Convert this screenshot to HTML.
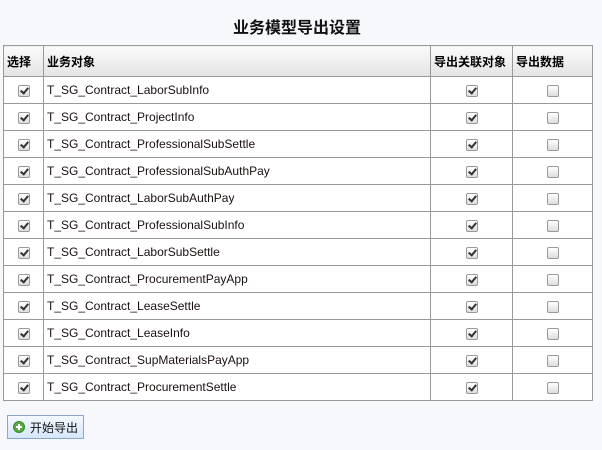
<!DOCTYPE html>
<html><head><meta charset="utf-8"><style>
body{margin:0;width:602px;height:450px;background:#f7f8fc;font-family:"Liberation Sans","Noto Sans CJK SC",sans-serif;position:relative;overflow:hidden}
h1{position:absolute;top:14px;left:0;width:594px;text-align:center;margin:0;font-size:16px;font-weight:bold;color:#111}
table{position:absolute;left:3px;top:45px;border-collapse:collapse;width:590px;background:#fff}
td,th{border:1px solid #999;font-size:12px;padding:0 0 0 3px;text-align:left;color:#1a1010}
th{height:30px;background:linear-gradient(#fafafa,#e4e4e4);font-weight:bold;color:#000}
td{height:26px}
.c{text-align:center;padding:0}
.cb{display:inline-block;width:10px;height:10px;border:1px solid #999;border-radius:2px;background:linear-gradient(#fff,#ddd);position:relative;vertical-align:middle}
.k:after{content:"";position:absolute;left:3px;top:0px;width:3px;height:6px;border:solid #333;border-width:0 2px 2px 0;transform:rotate(40deg)}
.btn{position:absolute;left:7px;top:415px;width:77px;height:24px;border:1px solid #8ba6c8;background:linear-gradient(#f4f9ff,#d6e7fb);font-size:12px;line-height:24px;box-sizing:border-box;padding-left:22px;color:#111}
.ic{position:absolute;left:5px;top:5px;width:12px;height:12px;border-radius:50%;background:#5aa845;border:1px solid #3c8a2c;box-sizing:border-box}
.ic:before{content:"";position:absolute;left:2px;top:4px;width:6px;height:2px;background:#fff}
.ic:after{content:"";position:absolute;left:4px;top:2px;width:2px;height:6px;background:#fff}
</style></head><body>
<h1>业务模型导出设置</h1>
<table>
<tr><th style="width:36px">选择</th><th style="width:383px">业务对象</th><th style="width:78px">导出关联对象</th><th>导出数据</th></tr>
<tr><td class="c"><span class="cb k"></span></td><td>T_SG_Contract_LaborSubInfo</td><td class="c"><span class="cb k"></span></td><td class="c"><span class="cb"></span></td></tr>
<tr><td class="c"><span class="cb k"></span></td><td>T_SG_Contract_ProjectInfo</td><td class="c"><span class="cb k"></span></td><td class="c"><span class="cb"></span></td></tr>
<tr><td class="c"><span class="cb k"></span></td><td>T_SG_Contract_ProfessionalSubSettle</td><td class="c"><span class="cb k"></span></td><td class="c"><span class="cb"></span></td></tr>
<tr><td class="c"><span class="cb k"></span></td><td>T_SG_Contract_ProfessionalSubAuthPay</td><td class="c"><span class="cb k"></span></td><td class="c"><span class="cb"></span></td></tr>
<tr><td class="c"><span class="cb k"></span></td><td>T_SG_Contract_LaborSubAuthPay</td><td class="c"><span class="cb k"></span></td><td class="c"><span class="cb"></span></td></tr>
<tr><td class="c"><span class="cb k"></span></td><td>T_SG_Contract_ProfessionalSubInfo</td><td class="c"><span class="cb k"></span></td><td class="c"><span class="cb"></span></td></tr>
<tr><td class="c"><span class="cb k"></span></td><td>T_SG_Contract_LaborSubSettle</td><td class="c"><span class="cb k"></span></td><td class="c"><span class="cb"></span></td></tr>
<tr><td class="c"><span class="cb k"></span></td><td>T_SG_Contract_ProcurementPayApp</td><td class="c"><span class="cb k"></span></td><td class="c"><span class="cb"></span></td></tr>
<tr><td class="c"><span class="cb k"></span></td><td>T_SG_Contract_LeaseSettle</td><td class="c"><span class="cb k"></span></td><td class="c"><span class="cb"></span></td></tr>
<tr><td class="c"><span class="cb k"></span></td><td>T_SG_Contract_LeaseInfo</td><td class="c"><span class="cb k"></span></td><td class="c"><span class="cb"></span></td></tr>
<tr><td class="c"><span class="cb k"></span></td><td>T_SG_Contract_SupMaterialsPayApp</td><td class="c"><span class="cb k"></span></td><td class="c"><span class="cb"></span></td></tr>
<tr><td class="c"><span class="cb k"></span></td><td>T_SG_Contract_ProcurementSettle</td><td class="c"><span class="cb k"></span></td><td class="c"><span class="cb"></span></td></tr>
</table>
<div class="btn"><span class="ic"></span>开始导出</div>
</body></html>
